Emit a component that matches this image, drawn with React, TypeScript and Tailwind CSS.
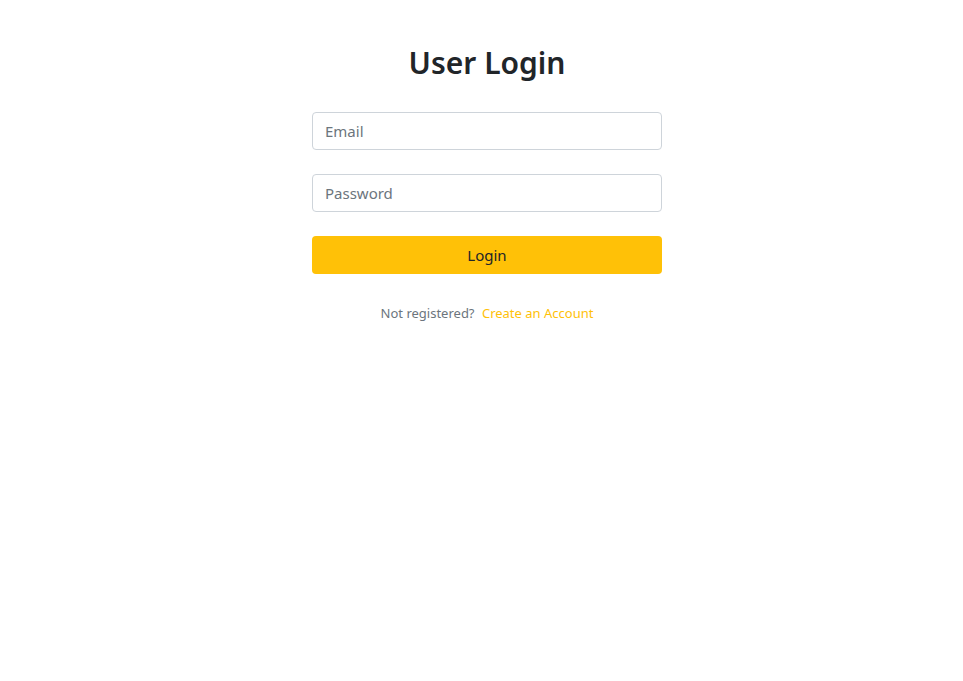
import React from "react";

export default function App() {
  return (
    <div className="min-h-screen bg-white font-['Noto_Sans',sans-serif] text-[#212529] pl-[11px]">
      <div className="mx-auto w-[350px] pt-[44px] flex flex-col">
        <h1 className="text-center text-[30px] font-semibold leading-[38px] mb-[30px]">
          User Login
        </h1>
        <form className="flex flex-col gap-6" onSubmit={(e) => e.preventDefault()}>
          <input
            type="email"
            placeholder="Email"
            className="h-[38px] w-full rounded border border-[#ced4da] px-3 text-[15px] placeholder:text-[#6c757d] outline-none"
          />
          <input
            type="password"
            placeholder="Password"
            className="h-[38px] w-full rounded border border-[#ced4da] px-3 text-[15px] placeholder:text-[#6c757d] outline-none"
          />
          <button
            type="submit"
            className="h-[38px] w-full rounded bg-[#ffc107] text-[15px] text-[#212529]"
          >
            Login
          </button>
        </form>
        <p className="mt-[29px] text-center text-[13px] leading-5 text-[#6c757d]">
          Not registered?{" "}
          <a href="#" className="ml-1 text-[#ffc107]">
            Create an Account
          </a>
        </p>
      </div>
    </div>
  );
}
